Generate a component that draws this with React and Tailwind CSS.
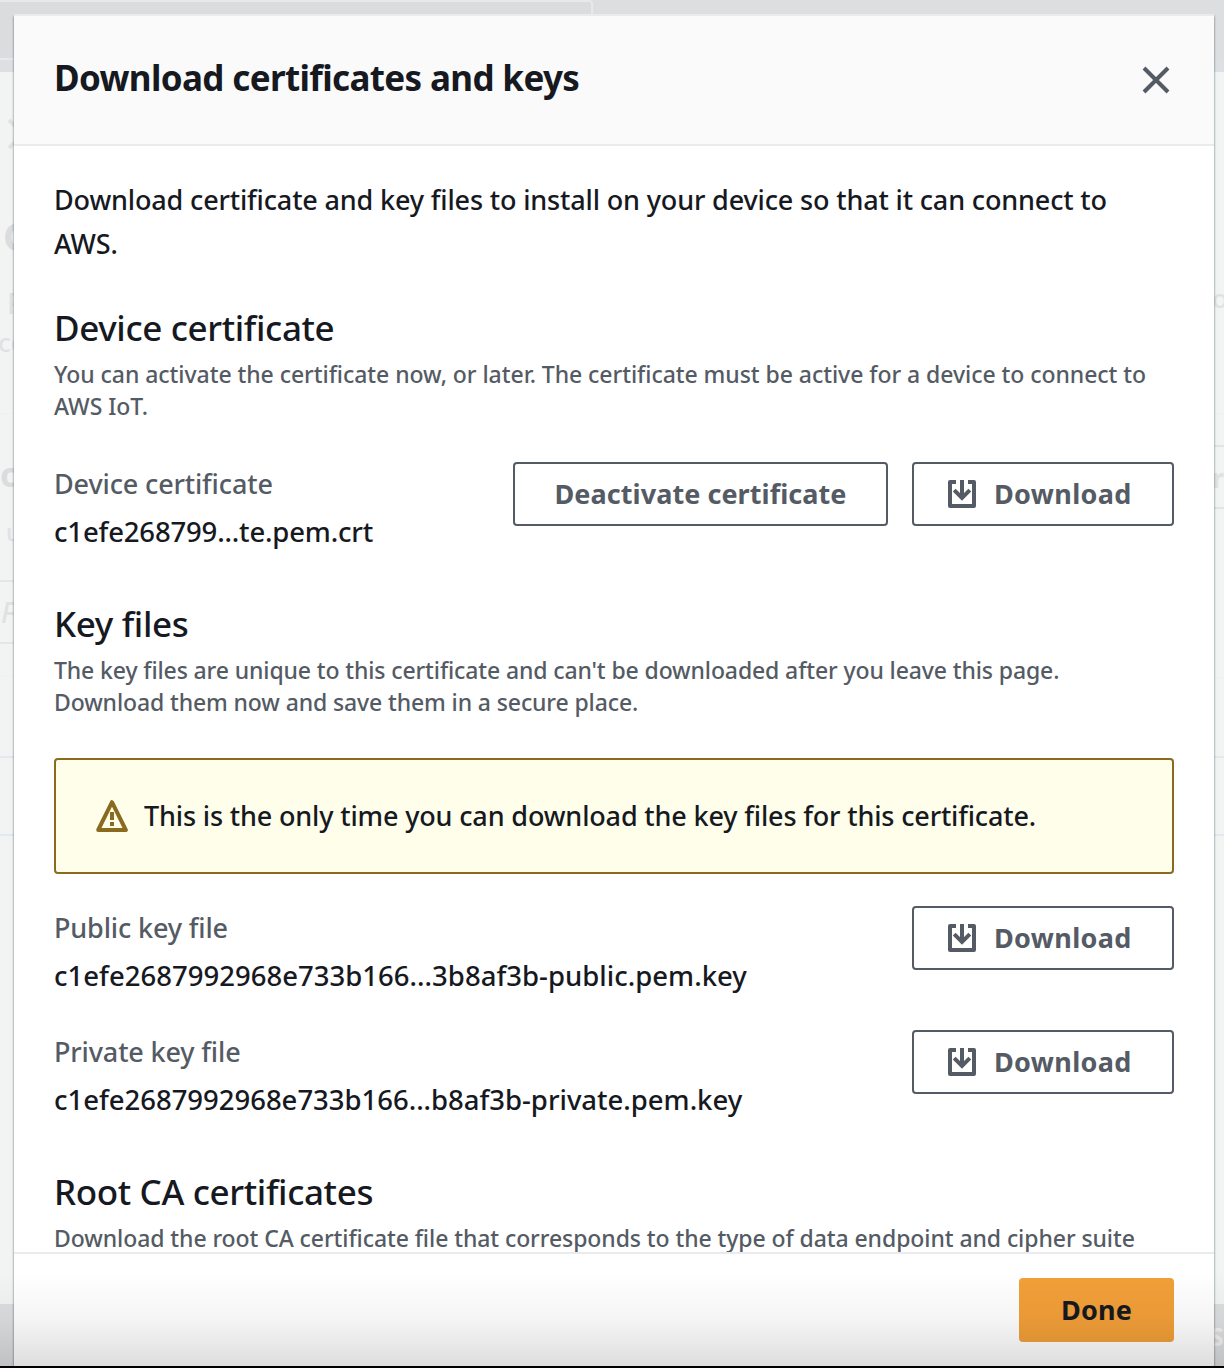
function DownloadIcon() {
  return (
    <svg viewBox="0 0 28 28" className="size-7 shrink-0" fill="none" stroke="currentColor" strokeWidth="4">
      <path d="M8 2H2v24h24V2h-6" strokeLinejoin="round" />
      <path d="M14 0v17" />
      <path d="M6.2 10.1l7.8 7.8 7.8-7.8" />
    </svg>
  );
}

function WarningIcon() {
  return (
    <svg viewBox="0 0 32 32" className="size-8 shrink-0 text-[#8a6a1f]" fill="none" stroke="currentColor">
      <path d="M16 2.2L29.8 30H2.2z" strokeWidth="4" strokeLinejoin="round" />
      <path d="M16 12v8M16 22v4" strokeWidth="4" />
    </svg>
  );
}

function CloseIcon() {
  return (
    <svg viewBox="0 0 32 32" className="size-8" fill="none" stroke="currentColor" strokeWidth="4">
      <path d="M4 4l24 24M28 4L4 28" />
    </svg>
  );
}

function DownloadButton() {
  return (
    <button className="flex h-16 w-[262px] items-center rounded-[4px] border-2 border-[#545b64] bg-white pl-[34px] text-[27px] font-bold tracking-[0.35px] text-[#545b64]">
      <DownloadIcon />
      <span className="ml-[18px]">Download</span>
    </button>
  );
}

function SectionHeading({ title, spacing = "tracking-[-0.05px]", children }) {
  return (
    <div>
      <h2 className="pt-px text-[35px] leading-[44px] font-medium tracking-[-0.36px] text-[#16191f]">{title}</h2>
      <p className={`mt-2 text-[23px] leading-8 font-medium whitespace-nowrap text-[#545b64] ${spacing}`}>
        {children}
      </p>
    </div>
  );
}

function FileRow({ label, name, nameSpacing = "tracking-[-0.12px]", children }) {
  return (
    <div className="flex items-start justify-between">
      <div className="text-[27px] leading-[44px] font-medium">
        <div className="tracking-[-0.14px] text-[#545b64]">{label}</div>
        <div className={`mt-1 text-[27.5px] text-[#16191f] ${nameSpacing}`}>{name}</div>
      </div>
      <div className="flex gap-6">{children}</div>
    </div>
  );
}

function Backdrop() {
  return (
    <div className="flex h-full flex-col bg-[#f2f4f4]">
      <div className="h-[60px] bg-[#dddee0]">
        <div className="h-[60px] w-[593px] rounded-tr-[4px] border-y-2 border-r-2 border-[#e8e9ea] bg-[#dbdcde]" />
      </div>
      <div className="h-3 shrink-0 bg-[#dde0e2]" />
      <div className="flex h-[1232px] shrink-0 justify-between leading-none font-medium text-[#dfe2e3]">
        <div className="w-[14px] overflow-hidden whitespace-nowrap">
          <div className="h-[142px] pt-[46px]">
            <svg viewBox="0 0 14 32" className="h-8 w-[14px]" fill="none" stroke="currentColor" strokeWidth="4">
              <path d="M9 2l14 14L9 30" />
            </svg>
          </div>
          <div className="h-[75px] pt-[2px] pl-[3px] text-[40px] font-bold text-[#dadcde]">C</div>
          <div className="h-[40px] pl-[7px] text-[28px]">P</div>
          <div className="h-[84px] text-[26px] -indent-[2px]">cer</div>
          <div className="h-[54px] border-t border-[#eff1f1] pt-[47px]">
            <div className="text-[34px] leading-[26px] font-bold text-[#dadcde]">c</div>
          </div>
          <div className="h-[113px] pt-[53px] pl-[6px] text-[24px]">u</div>
          <div className="flex h-16 items-center border-y-2 border-[#e5e7e7] pl-[1px] text-[28px] italic">F</div>
          <div className="h-8" />
          <div className="h-20 border-t border-[#eff1f1]" />
          <div className="h-20 border-y-2 border-[#e1e8ef]" />
        </div>
        <div className="w-[10px] overflow-hidden whitespace-nowrap">
          <div className="h-[341px] pt-[213px] text-[26px] -indent-[2px]">on</div>
          <div className="h-8 border-t border-[#eff1f1]" />
          <div className="flex h-16 items-center border-y-2 border-[#e1e4e4] text-[27px] font-bold -indent-[2px]">re</div>
          <div className="h-[168px]" />
          <div className="h-[79px] border-t border-[#eff1f1]" />
          <div className="h-20 border-y-2 border-[#e1e8ef]" />
        </div>
      </div>
      <div className="flex h-16 shrink-0 justify-end overflow-hidden bg-[#dddee0]">
        <span className="w-[14px] pt-[20px] text-[25px] leading-6 font-bold whitespace-nowrap text-[#f0f1f1]">Se</span>
      </div>
    </div>
  );
}

export default function App() {
  return (
    <div className="relative h-[1368px] w-[1224px] overflow-hidden font-['Noto_Sans','Open_Sans',sans-serif]">
      <Backdrop />

      <div
        role="dialog"
        className="absolute top-[14px] left-[14px] flex h-[1352px] w-[1200px] flex-col bg-white shadow-[0_2px_2px_rgba(0,28,36,0.45),0_3px_3px_rgba(0,28,36,0.2)]"
      >
        <header className="flex h-[132px] shrink-0 justify-between border-y-2 border-[#eaebec] bg-[#fafafa] pr-[42px] pl-10">
          <h1 className="pt-[40px] text-[35px] leading-[44px] font-bold tracking-[-0.64px] text-[#16191f]">
            Download certificates and keys
          </h1>
          <button className="mt-12 size-8 text-[#545b64]" aria-label="Close">
            <CloseIcon />
          </button>
        </header>

        <main className="min-h-0 flex-1 overflow-hidden px-10 pt-8">
          <p className="text-[27px] leading-[44px] font-medium tracking-[-0.15px] text-[#16191f]">
            Download certificate and key files to install on your device so that it can connect to
            <br />
            AWS.
          </p>

          <section className="mt-[39px]">
            <SectionHeading title="Device certificate">
              You can activate the certificate now, or later. The certificate must be active for a device to connect to
              <br />
              AWS IoT.
            </SectionHeading>
            <div className="mt-10">
              <FileRow
                label="Device certificate"
                name="c1efe268799...te.pem.crt"
                nameSpacing="tracking-[-0.17px]"
              >
                <button className="h-16 w-[375px] rounded-[4px] border-2 border-[#545b64] bg-white text-[27px] font-bold tracking-[0.06px] text-[#545b64]">
                  Deactivate certificate
                </button>
                <DownloadButton />
              </FileRow>
            </div>
          </section>

          <section className="mt-[47px]">
            <SectionHeading title="Key files" spacing="tracking-[-0.12px]">
              The key files are unique to this certificate and can't be downloaded after you leave this page.
              <br />
              Download them now and save them in a secure place.
            </SectionHeading>
            <div className="mt-10 flex h-[116px] items-center gap-4 rounded-[4px] border-2 border-[#8a6a1f] bg-[#fffeeb] pl-10">
              <WarningIcon />
              <span className="text-[27px] leading-[44px] font-medium tracking-[-0.15px] text-[#16191f]">
                This is the only time you can download the key files for this certificate.
              </span>
            </div>
            <div className="mt-8 flex flex-col gap-8">
              <FileRow
                label="Public key file"
                name="c1efe2687992968e733b166...3b8af3b-public.pem.key"
                nameSpacing="tracking-[0.02px]"
              >
                <DownloadButton />
              </FileRow>
              <FileRow
                label="Private key file"
                name="c1efe2687992968e733b166...b8af3b-private.pem.key"
                nameSpacing="tracking-[-0.02px]"
              >
                <DownloadButton />
              </FileRow>
            </div>
          </section>

          <section className="mt-[47px]">
            <SectionHeading title="Root CA certificates" spacing="tracking-[-0.08px]">
              Download the root CA certificate file that corresponds to the type of data endpoint and cipher suite
            </SectionHeading>
          </section>
        </main>

        <footer className="flex h-[114px] shrink-0 justify-end border-t-2 border-[#eaebec] bg-white pt-6 pr-10">
          <button className="h-16 w-[155px] rounded-[4px] bg-[#f29f38] text-[27px] font-bold tracking-[0.2px] text-[#16191f]">
            Done
          </button>
        </footer>
      </div>

      <div className="pointer-events-none absolute inset-x-0 bottom-0 h-24 border-b-2 border-black bg-linear-to-b from-transparent via-black/4 to-black/13" />
    </div>
  );
}
